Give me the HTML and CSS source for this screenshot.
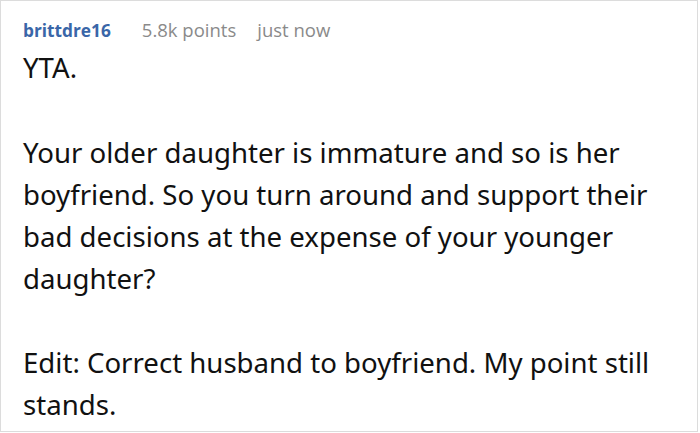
FILE: index.html
```html
<!DOCTYPE html>
<html>
<head>
<meta charset="utf-8">
<link rel="stylesheet" href="styles.css">
</head>
<body>
<div class="comment">
  <div class="meta">
    <span class="author">brittdre16</span>
    <span class="points">5.8k points</span>
    <span class="time">just now</span>
  </div>
  <div class="body">
    <p class="lead">YTA.</p>
    <p>Your older daughter is immature and so is her boyfriend. So you turn around and support their bad decisions at the expense of your younger daughter?</p>
    <p>Edit: Correct husband to boyfriend. My point still stands.</p>
  </div>
</div>
</body>
</html>
```

FILE: styles.css
```css
html, body {
  margin: 0;
  padding: 0;
  background: #ffffff;
}
.comment {
  box-sizing: border-box;
  width: 698px;
  height: 432px;
  border: 1px solid #dcdcdc;
  padding: 14px 0 0 22px;
  font-family: "Noto Sans", "Open Sans", sans-serif;
  overflow: hidden;
}
.meta {
  display: flex;
  align-items: baseline;
  gap: 21px;
  font-family: "Open Sans", sans-serif;
  font-size: 18.5px;
  line-height: 30px;
  color: #8a8a8a;
}
.author {
  color: #3a66a8;
  font-weight: 700;
  font-size: 17.3px;
  margin-right: 10px;
}
.body {
  color: #111111;
  font-size: 27.6px;
  line-height: 42px;
  width: 650px;
}
.body p {
  margin: 0 0 42px 0;
}
.body .lead {
  margin-bottom: 43px;
}
```
